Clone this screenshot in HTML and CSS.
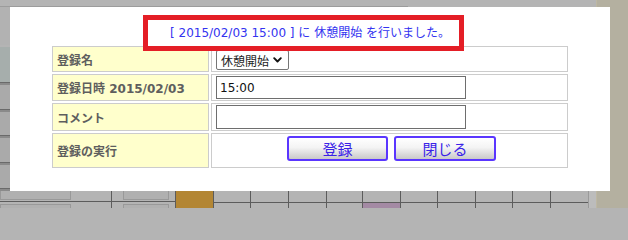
FILE: index.html
```html
<!DOCTYPE html>
<html lang="ja">
<head>
<meta charset="utf-8">
<title>登録</title>
<link rel="stylesheet" href="styles.css">
</head>
<body>
<div class="page">
  <div class="main">
    <div class="topbar"><div class="topline"></div></div>
    <div class="middle">
      <div class="leftstrip">
        <div class="ls ls-a"></div>
        <div class="ls ls-teal"></div>
        <div class="ls ls-b"></div>
        <div class="ls ls-b"></div>
        <div class="ls ls-b"></div>
        <div class="ls ls-b"></div>
      </div>
    </div>
    <div class="bottom">
      <div class="col w111"><div class="top"><div class="bbtn b-wide"></div></div><div class="low"><div class="bbtn b-wide"></div></div></div>
      <div class="col w64"><div class="top"><div class="bbtn b-small"></div></div><div class="low"><div class="bbtn b-small"></div></div></div>
      <div class="col w38 orange"></div>
      <div class="col w37"><div class="top"></div><div class="low"></div></div>
      <div class="col w38"><div class="top"></div><div class="low"></div></div>
      <div class="col w38"><div class="top"></div><div class="low"></div></div>
      <div class="col w36"><div class="top"></div><div class="low"></div></div>
      <div class="col w38"><div class="top"></div><div class="low purple"></div></div>
      <div class="col w37"><div class="top"></div><div class="low"></div></div>
      <div class="col w38"><div class="top"></div><div class="low"></div></div>
      <div class="col w37"><div class="top"></div><div class="low"></div></div>
      <div class="col w38"><div class="top"></div><div class="low"></div></div>
      <div class="col w38"><div class="top"></div><div class="low"></div></div>
      <div class="col w7 edge"></div>
    </div>
  </div>
  <div class="khaki"></div>
</div>

<div class="modal">
  <div class="msg">[ 2015/02/03 15:00 ] に 休憩開始 を行いました。</div>
  <div class="annot"></div>
  <table class="form">
    <tr class="r1">
      <th>登録名</th>
      <td>
        <span class="fakeselect">休憩開始<svg class="chev" width="9" height="6" viewBox="0 0 9 6"><path d="M1.2 1.2 L4.5 4.5 L7.8 1.2" fill="none" stroke="#111" stroke-width="1.9" stroke-linecap="round" stroke-linejoin="round"/></svg></span>
      </td>
    </tr>
    <tr class="r2">
      <th>登録日時 2015/02/03</th>
      <td><input class="txt" type="text" value="15:00"></td>
    </tr>
    <tr class="r3">
      <th>コメント</th>
      <td><input class="txt" type="text" value=""></td>
    </tr>
    <tr class="r4">
      <th>登録の実行</th>
      <td class="actions"><div class="btns"><button class="btn">登録</button><button class="btn">閉じる</button></div></td>
    </tr>
  </table>
</div>
</body>
</html>
```

FILE: styles.css
```css
html, body {
  margin: 0;
  padding: 0;
}
html {
  height: 208px;
  overflow: hidden;
  background: #b4b4b4;
}
body {
  width: 628px;
  height: 208px;
  overflow: hidden;
  position: relative;
  background: #b4b4b4;
  font-family: "DejaVu Sans", "Noto Sans CJK JP", sans-serif;
}
.page {
  display: flex;
  width: 628px;
  height: 208px;
}
.main {
  width: 596px;
  display: flex;
  flex-direction: column;
}
.topbar {
  height: 7px;
  background: #b4b4b4;
}
.topline {
  margin-top: 6px;
  width: 408px;
  height: 1px;
  background: #9c9c9c;
}
.middle {
  height: 184px;
  display: flex;
}
.leftstrip {
  width: 10px;
  display: flex;
  flex-direction: column;
}
.ls {
  border-bottom: 1px solid #6a6a6a;
  box-shadow: 0 2px 0 #8a8a8a;
  margin-bottom: 2px;
}
.ls-a { height: 40px; background: #b2b2b2; box-shadow: none; border-bottom: 0; }
.ls-teal { height: 38px; background: #a6aeac; }
.ls-b { height: 25px; background: #aaaaaa; }

.bottom {
  height: 17px;
  display: flex;
}
.col {
  display: flex;
  flex-direction: column;
  border-left: 1px solid #5c5c5c;
  box-sizing: border-box;
}
.col:first-child { border-left: 0; }
.w111 { width: 111px; }
.w64 { width: 64px; }
.w38 { width: 38px; }
.w37 { width: 37px; }
.w36 { width: 36px; }
.w7 { width: 8px; }
.top {
  height: 11px;
}
.low {
  flex: 1;
  border-top: 1px solid #5c5c5c;
}
.orange { background: #b38634; }
.purple { background: #a48aa4; }
.edge { background: #bcbcbc; border-left: 1px solid #9a9a9a; }
.bbtn {
  box-sizing: border-box;
  border: 1px solid #999;
  background: #b0b0b0;
}
.top .bbtn { height: 9px; border-top: 0; }
.low .bbtn { height: 4px; margin-top: 2px; border-bottom: 0; }
.b-wide { width: 71px; }
.b-small { width: 46px; margin-left: 11px; }
.khaki {
  width: 32px;
  background: #b4b0a0;
  border-left: 1px solid #bdb7a3;
}

.modal {
  position: absolute;
  left: 10px;
  top: 7px;
  width: 600px;
  height: 184px;
  background: #ffffff;
}
.msg {
  height: 21px;
  padding-top: 16px;
  line-height: 20px;
  font-size: 12px;
  color: #3333f0;
  text-align: center;
  white-space: pre;
}
.annot {
  position: absolute;
  left: 133px;
  top: 8px;
  width: 321px;
  height: 36px;
  box-sizing: border-box;
  border: 5px solid #e41e26;
  pointer-events: none;
}
.form {
  margin-left: 40px;
  width: 520px;
  border-collapse: separate;
  border-spacing: 2px;
  table-layout: fixed;
}
.form th, .form td {
  border: 1px solid #cccccc;
  padding: 0 4px;
  box-sizing: border-box;
}
.form th {
  width: 157px;
  background: #ffffcc;
  color: #5e5e5e;
  font-size: 12px;
  font-weight: bold;
  text-align: left;
  white-space: nowrap;
}
.form td {
  background: #ffffff;
}
.r1 { height: 26px; }
.r2 { height: 27px; }
.r3 { height: 28px; }
.r4 { height: 35px; }
.fakeselect {
  display: inline-flex;
  align-items: center;
  justify-content: space-between;
  box-sizing: border-box;
  width: 73px;
  height: 20px;
  margin-top: 2px;
  padding: 0 6px 0 4px;
  border: 1px solid #767676;
  border-radius: 2px;
  font-size: 12px;
  color: #222;
  white-space: nowrap;
  vertical-align: middle;
}
.chev { display: block; flex: none; }
.txt {
  display: block;
  box-sizing: border-box;
  width: 250px;
  height: 23px;
  border: 1px solid #6e6e6e;
  padding: 0 3px;
  font-family: inherit;
  font-size: 12px;
  color: #111;
  outline: none;
  margin: 0;
}
.r3 .txt { height: 24px; }
.form td.actions {
  vertical-align: top;
  padding-top: 2px;
}
.btns {
  display: flex;
  justify-content: center;
  gap: 6px;
  padding-left: 4px;
}
.btn {
  box-sizing: border-box;
  width: 101px;
  height: 25px;
  margin: 0;
  padding: 0;
  border: 2px solid #5a36ff;
  border-radius: 3px;
  background: linear-gradient(#ffffff 0%, #f4f4f4 45%, #c9c9c9 100%);
  color: #3a22e8;
  font-family: "Noto Sans CJK JP", sans-serif;
  font-size: 15px;
  line-height: 20px;
}
.btn + .btn { width: 102px; }
```
